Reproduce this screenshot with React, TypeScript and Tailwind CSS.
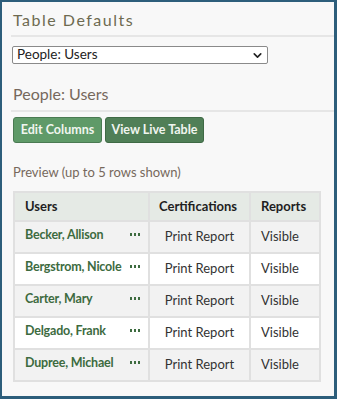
import { ChevronDown } from "lucide-react";

type Row = { name: string };

const rows: Row[] = [
  { name: "Becker, Allison" },
  { name: "Bergstrom, Nicole" },
  { name: "Carter, Mary" },
  { name: "Delgado, Frank" },
  { name: "Dupree, Michael" },
];

function Dots() {
  return (
    <span className="flex gap-[1.5px] mt-[6px] mr-[2px]">
      <span className="w-[2.5px] h-[2.5px] bg-[#3d6b3f]" />
      <span className="w-[2.5px] h-[2.5px] bg-[#3d6b3f]" />
      <span className="w-[2.5px] h-[2.5px] bg-[#3d6b3f]" />
    </span>
  );
}

export default function App() {
  return (
    <div
      className="w-[337px] h-[399px] overflow-hidden bg-[#f8f8f8] border-l-2 border-t-2 border-r-[3px] border-b-[3px] border-[#2d5e7b] text-[#333]"
      style={{ fontFamily: "Lato, 'Open Sans', sans-serif" }}
    >
      <div className="pl-[9px] pt-[7px]">
        <h1 className="text-[16px] leading-[22px] tracking-[1.5px] text-[#6d6a50] px-[2px]">
          Table Defaults
        </h1>
        <div className="mt-[4px] h-[2px] bg-[#e6e6e6]" />

        <div className="mt-[9px] ml-[1px] w-[256px] h-[18px] flex items-center justify-between bg-white border border-[#8a8a8a] rounded-[2px] pl-[4px] pr-[3px]">
          <span className="text-[13.5px] leading-none text-[#222]">People: Users</span>
          <ChevronDown size={13} strokeWidth={3} className="text-[#222]" />
        </div>

        <h2 className="mt-[19px] px-[2px] text-[16px] leading-[22px] text-[#76685c]">
          People: Users
        </h2>
        <div className="mt-[5px] h-[2px] bg-[#e6e6e6]" />

        <div className="mt-[5px] ml-[2px] flex gap-[3px]">
          <button className="w-[89px] h-[26px] rounded-[3px] border border-[#4a7a52] bg-[#5f9a68] text-[12.5px] font-bold text-[#f0f5ef]">
            Edit Columns
          </button>
          <button className="w-[99px] h-[26px] rounded-[3px] border border-[#3f6a45] bg-[#507f57] text-[12.5px] font-bold text-[#f0f5ef]">
            View Live Table
          </button>
        </div>

        <p className="mt-[20px] px-[2px] text-[13px] leading-[18px] text-[#76685c]">
          Preview (up to 5 rows shown)
        </p>

        <table className="mt-[10px] ml-[2px] w-[308px] border-collapse border-2 border-[#e0e0e0] text-[13px]">
          <thead>
            <tr className="bg-[#e5eae5] h-[29px]">
              <th className="w-[135px] border-2 border-[#e0e0e0] text-left pl-[10px] font-bold text-[#1f1f1f]">
                Users
              </th>
              <th className="w-[101px] border-2 border-[#e0e0e0] text-left pl-[9px] font-bold text-[#1f1f1f]">
                Certifications
              </th>
              <th className="border-2 border-[#e0e0e0] text-left pl-[10px] font-bold text-[#1f1f1f]">
                Reports
              </th>
            </tr>
          </thead>
          <tbody>
            {rows.map((r, i) => (
              <tr key={r.name} className={i % 2 === 0 ? "bg-[#f2f2f2] h-[32px]" : "bg-white h-[32px]"}>
                <td className="border-2 border-[#e0e0e0] pl-[10px] pr-[6px] align-top pt-[5px]">
                  <div className="flex items-start justify-between">
                    <span className="whitespace-nowrap text-[12.5px] leading-[16px] tracking-[-0.2px] font-bold text-[#3d6b3f]">
                      {r.name}
                    </span>
                    <Dots />
                  </div>
                </td>
                <td className="border-2 border-[#e0e0e0] text-center text-[#333]">Print Report</td>
                <td className="border-2 border-[#e0e0e0] pl-[10px] text-[#333]">Visible</td>
              </tr>
            ))}
          </tbody>
        </table>
      </div>
    </div>
  );
}
